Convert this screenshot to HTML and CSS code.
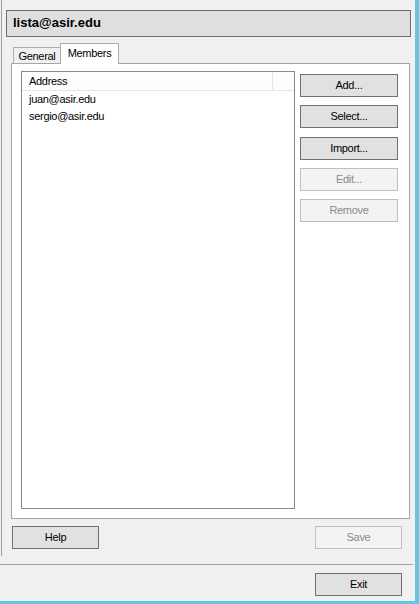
FILE: index.html
```html
<!DOCTYPE html>
<html>
<head>
<meta charset="utf-8">
<link rel="stylesheet" href="styles.css">
</head>
<body>
<div class="window">
  <div class="upper">
    <div class="title-box">lista@asir.edu</div>
    <div class="tabs">
      <div class="tab">General</div>
      <div class="tab active">Members</div>
    </div>
    <div class="panel">
      <div class="listbox">
        <div class="list-header">
          <div class="col-head">Address</div>
          <div class="col-rest"></div>
        </div>
        <div class="row">juan@asir.edu</div>
        <div class="row">sergio@asir.edu</div>
      </div>
      <div class="btn-col">
        <button class="btn">Add...</button>
        <button class="btn">Select...</button>
        <button class="btn">Import...</button>
        <button class="btn disabled">Edit...</button>
        <button class="btn disabled">Remove</button>
      </div>
    </div>
    <div class="bottom-row">
      <button class="btn wide">Help</button>
      <button class="btn wide disabled">Save</button>
    </div>
  </div>
  <div class="sep"></div>
  <div class="footer">
    <button class="btn wide">Exit</button>
  </div>
</div>
</body>
</html>
```

FILE: styles.css
```css
html, body {
  margin: 0;
  padding: 0;
  background: #f0f0f0;
}
body {
  font-family: "Liberation Sans", Arial, sans-serif;
  font-size: 11px;
  letter-spacing: -0.3px;
  color: #000;
}
.window {
  width: 419px;
  height: 604px;
  box-sizing: border-box;
  border-right: 4px solid #63c6e6;
  border-bottom: 3px solid #63c6e6;
  background: #f0f0f0;
}
.upper {
  margin-left: 1px;
  border-left: 1px solid #a0a0a0;
  height: 556px;
  box-sizing: border-box;
  padding-top: 10px;
}
.title-box {
  margin-left: 4px;
  width: 405px;
  height: 27px;
  box-sizing: border-box;
  border: 1px solid #6d6d6d;
  background: #dfdfdf;
  font-weight: bold;
  font-size: 13px;
  letter-spacing: 0;
  padding-left: 6px;
  line-height: 24px;
}
.tabs {
  display: flex;
  align-items: flex-end;
  margin-top: 6px;
  margin-left: 9px;
  padding-left: 2px;
  height: 20px;
}
.tab {
  box-sizing: border-box;
  width: 48px;
  height: 16px;
  border: 1px solid #adadad;
  border-bottom: none;
  background: #f0f0f0;
  text-align: center;
  line-height: 16px;
}
.tab.active {
  position: relative;
  z-index: 1;
  width: 59px;
  height: 21px;
  margin-left: -1px;
  margin-bottom: -1px;
  background: #fff;
  line-height: 18px;
}
.panel {
  margin-left: 9px;
  width: 399px;
  height: 456px;
  box-sizing: border-box;
  border: 1px solid #a5a5a5;
  background: #fff;
  display: flex;
  padding: 7px 11px 9px 9px;
}
.listbox {
  width: 274px;
  height: 438px;
  box-sizing: border-box;
  border: 1px solid #828790;
  background: #fff;
}
.list-header {
  display: flex;
  height: 18px;
  border-bottom: 1px solid #e5e5e5;
  background: #fdfdfd;
}
.col-head {
  box-sizing: border-box;
  width: 251px;
  border-right: 1px solid #e5e5e5;
  padding-left: 7px;
  line-height: 18px;
}
.col-rest {
  flex: 1;
}
.row {
  padding-left: 7px;
  height: 17px;
  line-height: 17px;
}
.btn-col {
  margin-left: 5px;
  display: flex;
  flex-direction: column;
  gap: 8.25px;
  padding-top: 3px;
}
.btn {
  width: 98px;
  height: 23px;
  box-sizing: border-box;
  border: 1px solid #707070;
  background: #e1e1e1;
  font-family: "Liberation Sans", Arial, sans-serif;
  font-size: 11px;
  letter-spacing: -0.3px;
  color: #000;
  padding: 0;
  margin: 0;
  text-align: center;
  line-height: 21px;
}
.btn.disabled {
  border-color: #bfbfbf;
  background: #f3f3f3;
  color: #8a8a8a;
}
.btn.wide {
  width: 87px;
}
.bottom-row {
  display: flex;
  justify-content: space-between;
  margin-top: 7px;
  margin-left: 10px;
  margin-right: 13px;
}
.sep {
  margin-top: 8px;
  width: 413px;
  height: 1px;
  background: #a0a0a0;
}
.footer {
  display: flex;
  justify-content: flex-end;
  margin-top: 8px;
  margin-right: 13px;
}
```
